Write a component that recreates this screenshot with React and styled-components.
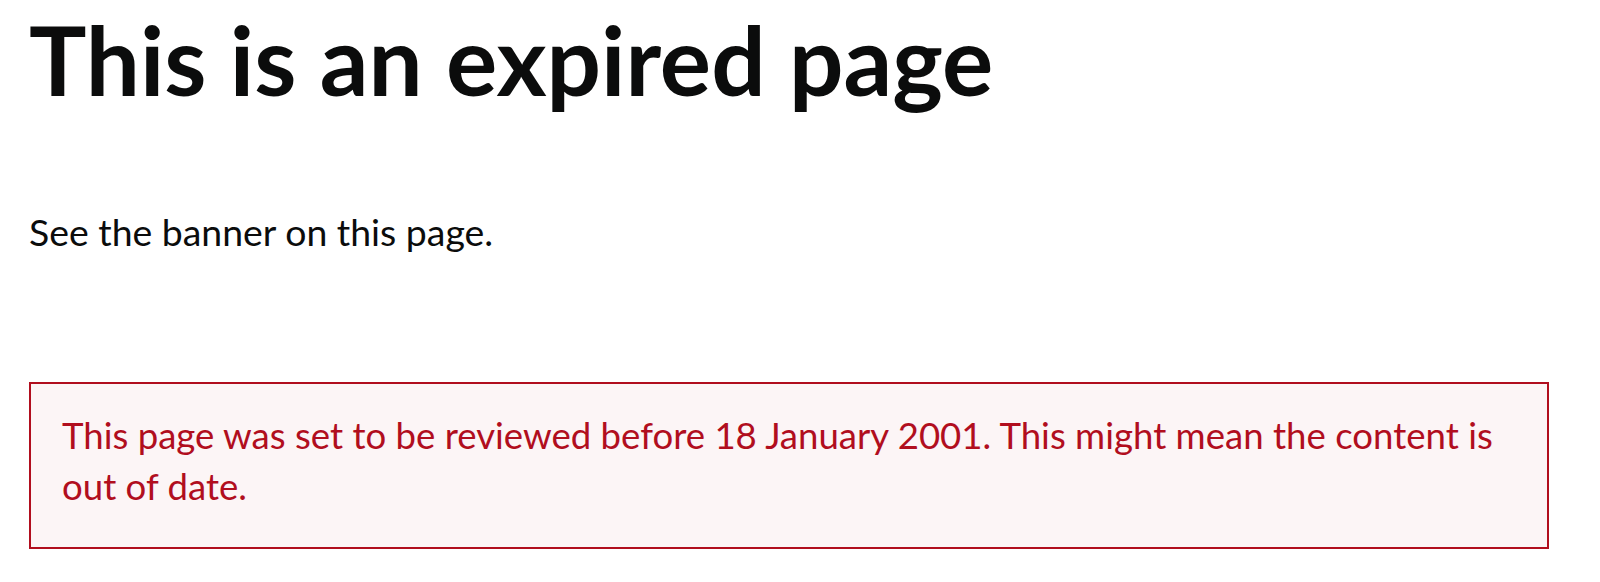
import React from "react"
import styled, { createGlobalStyle } from "styled-components"

const GlobalStyle = createGlobalStyle`
  html, body {
    margin: 0;
    padding: 0;
    background: #ffffff;
  }
  body {
    font-family: Lato, "Liberation Sans", sans-serif;
    color: #0b0c0c;
  }
`

const red = "#b10e1e"

export default function App() {
  return (
    <>
      <GlobalStyle />
      <Page>
        <Heading>This is an expired page</Heading>
        <Body>See the banner on this page.</Body>
        <Banner>
          <BannerText>
            This page was set to be reviewed before 18 January 2001. This might mean the
            content is out of date.
          </BannerText>
        </Banner>
      </Page>
    </>
  )
}

const Page = styled.main`
  padding: 2px 51px 0 29px;
  width: 1520px;
`

const Heading = styled.h1`
  margin: 0;
  font-size: 96px;
  font-weight: 700;
  line-height: 114px;
  letter-spacing: 0;
  color: #0b0c0c;
`

const Body = styled.p`
  margin: 90px 0 0;
  font-size: 37.4px;
  line-height: 51px;
  color: #0b0c0c;
`

const Banner = styled.section`
  margin-top: 125px;
  border: 2px solid ${red};
  background: #fcf5f6;
  padding: 26px 30px 35px 31px;
`

const BannerText = styled.p`
  margin: 0;
  font-size: 36.6px;
  line-height: 51px;
  color: ${red};
`
